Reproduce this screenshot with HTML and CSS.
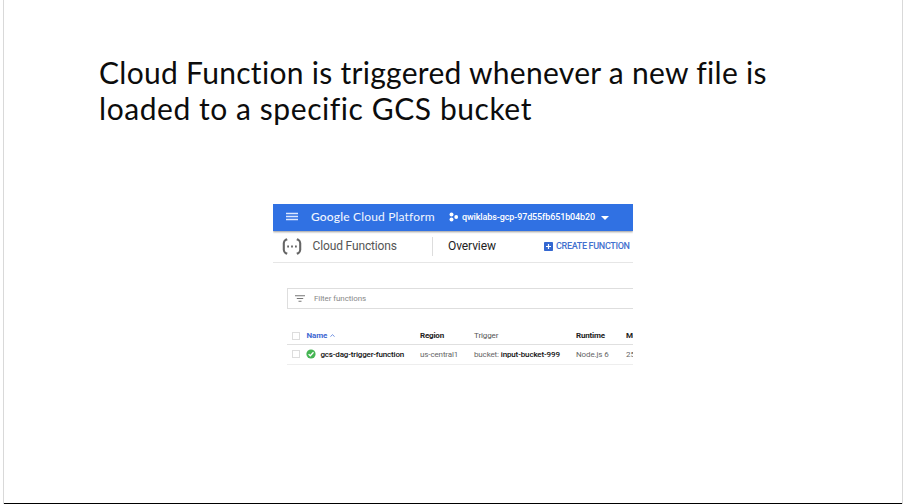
FILE: index.html
```html
<!DOCTYPE html>
<html lang="en">
<head>
<meta charset="utf-8">
<title>Cloud Function trigger</title>
<link rel="stylesheet" href="styles.css">
</head>
<body>
<main class="slide">
  <h1 class="title"><span class="line1">Cloud Function is triggered whenever a new file is</span><br><span class="line2">loaded to a specific GCS bucket</span></h1>
  <section class="console">
    <header class="topbar">
      <svg class="menu" width="12" height="10" viewBox="0 0 12 10"><path d="M0 1.5h12M0 4.5h12M0 7.5h12" stroke="#dce8ff" stroke-width="1.4"/></svg>
      <span class="brand"><b>Google</b> Cloud Platform</span>
      <svg class="project-icon" width="10" height="10" viewBox="0 0 10 10" fill="#fff"><circle cx="2.5" cy="2.4" r="2"/><circle cx="2.5" cy="7.6" r="2"/><circle cx="7.2" cy="5" r="1.9"/></svg>
      <span class="project">qwiklabs-gcp-97d55fb651b04b20</span>
      <svg class="caret" width="8" height="4" viewBox="0 0 8 4"><path d="M0 0h8L4 4z" fill="#fff"/></svg>
    </header>
    <nav class="toolbar">
      <svg class="product-icon" width="20" height="17" viewBox="0 0 20 17"><path d="M5.2 1.2L3.4 2Q2 3 1.8 5v7q.2 2 1.6 3l1.8.8M14.8 1.2l1.8.8Q18 3 18.2 5v7q-.2 2-1.6 3l-1.8.8" fill="none" stroke="#666" stroke-width="2.1"/><path d="M5.2 7.6H7v1.8H5.2zM9.1 7.6h1.8v1.8H9.1zM13 7.6h1.8v1.8H13z" fill="#666"/></svg>
      <span class="product">Cloud Functions</span>
      <span class="page">Overview</span>
      <svg class="plus" width="9" height="9" viewBox="0 0 9 9"><rect width="9" height="9" rx=".8" fill="#3467d1"/><path d="M4.5 2v5M2 4.5h5" stroke="#fff" stroke-width="1.2"/></svg>
      <span class="create">CREATE FUNCTION</span>
    </nav>
    <div class="filter">
      <svg width="10" height="7" viewBox="0 0 10 7"><path d="M0 .8h10M1.8 3.5h6.4M3.5 6.2h3" stroke="#777" stroke-width="1.1"/></svg>
      <span class="filter-label">Filter functions</span>
    </div>
    <div class="table">
      <div class="row head">
        <i class="check"></i>
        <span class="name-head"><span class="t-name">Name</span><svg width="5" height="3" viewBox="0 0 5 3"><path d="M.4 2.7L2.5.7l2.1 2" fill="none" stroke="#4a74d8" stroke-width=".8"/></svg></span>
        <span class="t-region">Region</span>
        <span class="t-trigger">Trigger</span>
        <span class="t-runtime">Runtime</span>
        <span class="t-more">Me</span>
      </div>
      <div class="row item">
        <i class="check"></i>
        <span class="name-cell"><svg width="10" height="10" viewBox="0 0 10 10"><circle cx="5" cy="5" r="4.6" fill="#45b553"/><path d="M2.6 5.1l1.7 1.7 3.2-3.6" fill="none" stroke="#fff" stroke-width="1.3"/></svg><span class="fn">gcs-dag-trigger-function</span></span>
        <span class="region">us-central1</span>
        <span class="trigger">bucket: <b>input-bucket-999</b></span>
        <span class="runtime">Node.js 6</span>
        <span class="more">25</span>
      </div>
    </div>
  </section>
</main>
</body>
</html>
```
FILE: styles.css
```css
* { box-sizing: border-box; }
body { margin: 0; width: 908px; height: 504px; overflow: hidden; background: #fff; font-family: Roboto, "Liberation Sans", sans-serif; }
.slide { width: 900px; height: 504px; margin-left: 3px; padding: 54px 0 0 95px; border: solid #d9d9d9; border-width: 0 1px; background: linear-gradient(#000, #000) bottom / 100% 1px no-repeat #fff; }
.title { margin: 0; height: 72px; font: 400 30px/36px Lato, sans-serif; color: #0c0c0c; white-space: nowrap; }
.line1 { letter-spacing: .29px; }
.line2 { letter-spacing: .56px; }
.console { width: 360.5px; height: 164px; margin: 78px 0 0 173.5px; overflow: hidden; white-space: nowrap; }
.console svg { flex: none; display: block; }
.topbar { position: relative; display: flex; align-items: center; height: 27px; padding: 0 0 2px 13px; background: #3071e3; box-shadow: 0 1px 2px #999; color: #fff; }
.brand { width: 138px; margin-left: 13.5px; font: 400 12px/16px Lato, sans-serif; letter-spacing: .17px; color: #f0f5ff; }
.brand b { font-weight: 500; }
.project { width: 134px; margin-left: 3px; font-size: 9px; font-weight: 500; letter-spacing: -.11px; }
.caret { margin: 3px 0 0 5px; }
.toolbar { display: flex; align-items: center; height: 32px; padding: 0 0 1px 9px; border-bottom: 1px solid #e6e6e6; }
.product { width: 119px; margin-left: 11px; font-size: 12px; letter-spacing: -.14px; color: #555; }
.page { height: 19px; padding-left: 15.5px; width: 112px; border-left: 1px solid #ddd; font-size: 12px; line-height: 19px; letter-spacing: -.1px; color: #222; }
.create { margin-left: 3.5px; font-size: 9px; font-weight: 500; letter-spacing: -.32px; color: #4270ce; }
.filter { display: flex; align-items: center; height: 21px; margin: 25px -4px 0 14px; padding-left: 7.5px; border: 1px solid #dedede; }
.filter-label { margin-left: 9px; font-size: 8px; letter-spacing: -.08px; color: #888; }
.table { margin: 18px 0 0 14px; font-size: 8px; }
.row { display: grid; grid-template-columns: 20px 108.5px 54px 102px 50px 30px; align-items: center; padding-left: 5px; border-bottom: 1px solid #e0e0e0; }
.head { height: 18px; color: #222; font-weight: 700; letter-spacing: -.2px; }
.item { height: 20px; padding-bottom: 1px; color: #666; border-color: #eee; letter-spacing: -.12px; }
.check { width: 8px; height: 8px; border: 1px solid #ddd; }
.name-head, .name-cell { display: flex; align-items: center; }
.name-head { color: #4169d2; margin-left: -5px; }
.name-head svg { margin-left: 3px; }
.t-name { letter-spacing: -.1px; }
.t-trigger { font-weight: 400; color: #555; letter-spacing: -.1px; }
.name-cell { margin-left: -6px; }
.fn { margin-left: 5px; font-weight: 500; letter-spacing: -.17px; color: #111; }
.trigger { letter-spacing: -.14px; }
.trigger b { font-weight: 500; color: #111; }
```
